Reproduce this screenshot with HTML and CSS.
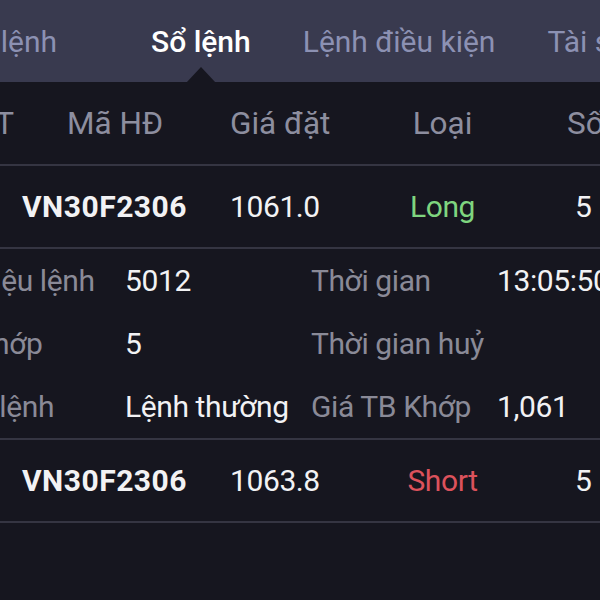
FILE: index.html
```html
<!DOCTYPE html>
<html lang="vi">
<head>
  <meta charset="UTF-8">
  <meta name="viewport" content="width=device-width, initial-scale=1">
  <title>Sổ lệnh</title>
  <link rel="stylesheet" href="styles.css">
</head>
<body>
  <nav class="tabs">
    <div class="tab first">Đặt lệnh</div>
    <div class="tab active">Sổ lệnh</div>
    <div class="tab">Lệnh điều kiện</div>
    <div class="tab">Tài sản</div>
  </nav>

  <section class="orders">
    <div class="row head">
      <div class="c-stt">STT</div>
      <div class="c-ma">Mã HĐ</div>
      <div class="c-gia">Giá đặt</div>
      <div class="c-loai">Loại</div>
      <div class="c-so">Số lượng</div>
    </div>

    <div class="row order">
      <div class="c-stt">1</div>
      <div class="c-ma code">VN30F2306</div>
      <div class="c-gia">1061.0</div>
      <div class="c-loai long">Long</div>
      <div class="c-so">5</div>
    </div>

    <div class="detail">
      <div class="label">Số hiệu lệnh</div>
      <div class="value">5012</div>
      <div class="label">Thời gian</div>
      <div class="value">13:05:50</div>

      <div class="label">KL khớp</div>
      <div class="value">5</div>
      <div class="label">Thời gian huỷ</div>
      <div class="value"></div>

      <div class="label">Loại lệnh</div>
      <div class="value">Lệnh thường</div>
      <div class="label">Giá TB Khớp</div>
      <div class="value">1,061</div>
    </div>

    <div class="row order">
      <div class="c-stt">2</div>
      <div class="c-ma code">VN30F2306</div>
      <div class="c-gia">1063.8</div>
      <div class="c-loai short">Short</div>
      <div class="c-so">5</div>
    </div>
  </section>
</body>
</html>
```

FILE: styles.css
```css
html, body {
  background-color: #16161f;
}

body {
  margin: 0;
  width: 600px;
  height: 600px;
  overflow: hidden;
  color: #f2f2f4;
  font-family: Roboto, "Noto Sans", sans-serif;
  font-size: 30px;
  letter-spacing: -0.4px;
}

.tabs {
  display: flex;
  align-items: center;
  height: 82px;
  background-color: #393a4f;
  gap: 52px;
  margin-left: -53px;
  white-space: nowrap;
  letter-spacing: 0;
}

.tab {
  position: relative;
  color: #8c91b3;
  font-size: 30px;
}

.tab.first {
  margin-right: 42px;
}

.tab.active {
  color: #ffffff;
  font-weight: 500;
}

.tab.active::after {
  content: "";
  position: absolute;
  left: 50%;
  bottom: -24px;
  margin-left: -15px;
  border-left: 15px solid transparent;
  border-right: 15px solid transparent;
  border-bottom: 16px solid #16161f;
}

.orders {
  margin-left: -50px;
  width: 720px;
}

.row {
  display: grid;
  grid-template-columns: 70px 190px 150px 165px 145px;
  align-items: center;
  height: 81px;
  border-bottom: 2px solid #353542;
  white-space: nowrap;
}

.head {
  height: 82px;
  color: #8d8e9f;
  font-size: 31.5px;
  letter-spacing: 0;
}

.c-stt {
  text-align: right;
  padding-right: 6px;
}

.head .c-ma {
  text-align: center;
}

.code {
  font-weight: 700;
  padding-left: 2px;
  letter-spacing: 0.5px;
}

.c-gia {
  padding-left: 20px;
}

.c-loai {
  text-align: center;
}

.c-so {
  padding-left: 50px;
}

.head .c-so {
  padding-left: 42px;
}

.order .c-stt {
  visibility: hidden;
}

.long {
  color: #7fd57f;
}

.short {
  color: #dc525c;
}

.detail {
  display: grid;
  grid-template-columns: 188px 186px 186px 160px;
  grid-auto-rows: 63px;
  align-items: center;
  margin-left: -13px;
  border-bottom: 2px solid #353542;
  white-space: nowrap;
}

.label {
  color: #8a8a97;
}

.value {
  color: #f2f2f4;
}
```
